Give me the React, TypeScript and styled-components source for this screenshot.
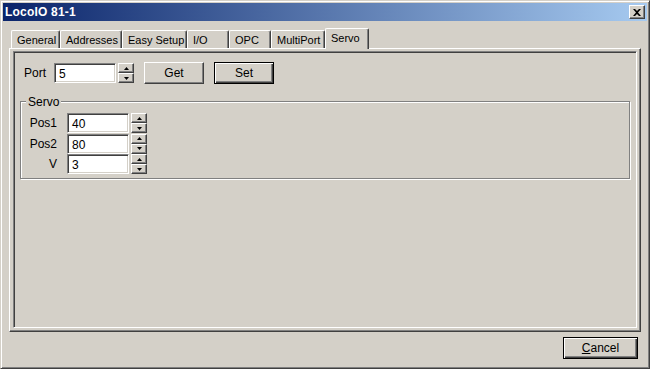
import styled, { createGlobalStyle } from "styled-components";

const GlobalStyle = createGlobalStyle`
  html, body {
    margin: 0;
    padding: 0;
    background: #d4d0c8;
  }
  * {
    box-sizing: border-box;
  }
`;

const tabs = [
  { label: "General", width: 49 },
  { label: "Addresses", width: 62 },
  { label: "Easy Setup", width: 65 },
  { label: "I/O", width: 42 },
  { label: "OPC", width: 42 },
  { label: "MultiPort", width: 54 },
  { label: "Servo", width: 44, active: true },
];

const servoRows = [
  { label: "Pos1", value: "40" },
  { label: "Pos2", value: "80" },
  { label: "V", value: "3" },
];

const Spinner = () => (
  <SpinBox>
    <SpinButton>
      <svg width="5" height="3" viewBox="0 0 5 3">
        <polygon points="2.5,0 5,3 0,3" fill="#000" />
      </svg>
    </SpinButton>
    <SpinButton>
      <svg width="5" height="3" viewBox="0 0 5 3">
        <polygon points="0,0 5,0 2.5,3" fill="#000" />
      </svg>
    </SpinButton>
  </SpinBox>
);

const App = () => {
  return (
    <>
      <GlobalStyle />
      <Window>
        <TitleBar>
          <Title>LocoIO 81-1</Title>
          <CloseButton>
            <svg width="8" height="7" viewBox="0 0 8 7">
              <path d="M0 0h2l2 2 2-2h2L5 3.5 8 7H6L4 5 2 7H0l3-3.5z" fill="#000" />
            </svg>
          </CloseButton>
        </TitleBar>
        <Body>
          <TabRow>
            {tabs.map((t) => (
              <Tab key={t.label} $width={t.width} $active={!!t.active}>
                {t.label}
              </Tab>
            ))}
          </TabRow>
          <TabPage>
            <Inner>
              <PortRow>
                <PortLabel>Port</PortLabel>
                <TextBox>5</TextBox>
                <Spinner />
                <Button>Get</Button>
                <Button $default>Set</Button>
              </PortRow>
              <GroupBox>
                <Legend>Servo</Legend>
                {servoRows.map((r) => (
                  <FieldRow key={r.label}>
                    <FieldLabel>{r.label}</FieldLabel>
                    <TextBox>{r.value}</TextBox>
                    <Spinner />
                  </FieldRow>
                ))}
              </GroupBox>
            </Inner>
          </TabPage>
          <Footer>
            <Button $default $wide>
              <u>C</u>ancel
            </Button>
          </Footer>
        </Body>
      </Window>
    </>
  );
};

export default App;

const Window = styled.div`
  width: 650px;
  height: 369px;
  background: #d4d0c8;
  border: 1px solid;
  border-color: #d4d0c8 #404040 #404040 #d4d0c8;
  box-shadow: inset 1px 1px #fff, inset -1px -1px #808080;
  padding: 2px;
  display: flex;
  flex-direction: column;
  font-family: "Liberation Sans", Arial, sans-serif;
  font-size: 11px;
  color: #000;
`;

const TitleBar = styled.div`
  height: 18px;
  background: linear-gradient(to right, #0a246a, #a6caf0);
  display: flex;
  align-items: center;
  justify-content: space-between;
  padding: 0 2px 0 2px;
`;

const Title = styled.span`
  color: #fff;
  font-weight: bold;
  font-size: 12px;
  letter-spacing: 0.2px;
`;

const CloseButton = styled.div`
  width: 16px;
  height: 14px;
  background: #d4d0c8;
  border: 1px solid;
  border-color: #fff #404040 #404040 #fff;
  box-shadow: inset -1px -1px #808080;
  display: flex;
  align-items: center;
  justify-content: center;
`;

const Body = styled.div`
  flex: 1;
  display: flex;
  flex-direction: column;
  padding: 7px 6px 0 6px;
`;

const TabRow = styled.div`
  display: flex;
  align-items: flex-end;
  height: 20px;
  padding-left: 2px;
  position: relative;
  z-index: 1;
`;

const Tab = styled.div<{ $width: number; $active: boolean }>`
  width: ${(p) => p.$width}px;
  height: ${(p) => (p.$active ? 21 : 18)}px;
  margin-bottom: ${(p) => (p.$active ? -1 : 0)}px;
  background: #d4d0c8;
  border-top: 1px solid #fff;
  border-left: 1px solid #fff;
  border-right: 1px solid #404040;
  border-top-left-radius: 2px;
  border-top-right-radius: 2px;
  box-shadow: inset -1px 0 #808080;
  padding: 3px 0 0 5px;
  font-size: 11px;
  white-space: nowrap;
`;

const TabPage = styled.div`
  width: 632px;
  height: 284px;
  border: 1px solid;
  border-color: #fff #404040 #404040 #fff;
  box-shadow: inset -1px -1px #808080;
  padding: 2px 3px 3px 3px;
  display: flex;
`;

const Inner = styled.div`
  flex: 1;
  border: 1px solid;
  border-color: #808080 #fff #fff #808080;
  box-shadow: inset 1px 1px #404040, inset -1px -1px #d4d0c8;
  padding: 10px 6px 0 6px;
  display: flex;
  flex-direction: column;
`;

const PortRow = styled.div`
  display: flex;
  align-items: center;
  height: 22px;
  padding-left: 4px;
`;

const PortLabel = styled.span`
  width: 30px;
  font-size: 12px;
`;

const TextBox = styled.div`
  width: 62px;
  height: 20px;
  background: #fff;
  border: 1px solid;
  border-color: #808080 #fff #fff #808080;
  box-shadow: inset 1px 1px #404040, inset -1px -1px #d4d0c8;
  padding: 3px 0 0 4px;
  font-size: 12px;
`;

const SpinBox = styled.div`
  display: flex;
  flex-direction: column;
  margin-left: 2px;
  height: 20px;
`;

const SpinButton = styled.div`
  width: 16px;
  height: 10px;
  background: #d4d0c8;
  border: 1px solid;
  border-color: #fff #404040 #404040 #fff;
  box-shadow: inset -1px -1px #808080;
  display: flex;
  align-items: center;
  justify-content: center;
`;

const Button = styled.div<{ $default?: boolean; $wide?: boolean }>`
  width: ${(p) => (p.$wide ? 75 : 60)}px;
  height: 22px;
  margin-left: 10px;
  background: #d4d0c8;
  display: flex;
  align-items: center;
  justify-content: center;
  font-size: 12px;
  border: 1px solid;
  border-color: ${(p) => (p.$default ? "#000" : "#fff #404040 #404040 #fff")};
  box-shadow: ${(p) =>
    p.$default
      ? "inset 1px 1px #fff, inset -1px -1px #404040, inset -2px -2px #808080"
      : "inset -1px -1px #808080"};
`;

const GroupBox = styled.div`
  position: relative;
  margin-top: 17px;
  height: 78px;
  border: 1px solid #808080;
  box-shadow: inset 1px 1px #fff, 1px 1px #fff;
  padding-top: 11px;
  display: flex;
  flex-direction: column;
`;

const Legend = styled.span`
  position: absolute;
  top: -7px;
  left: 5px;
  padding: 0 2px;
  background: #d4d0c8;
  font-size: 12px;
`;

const FieldRow = styled.div`
  display: flex;
  align-items: center;
  height: 20.5px;
`;

const FieldLabel = styled.span`
  width: 36px;
  text-align: right;
  margin-right: 10px;
  font-size: 12px;
`;

const Footer = styled.div`
  display: flex;
  justify-content: flex-end;
  padding: 5px 3px 0 0;
`;
